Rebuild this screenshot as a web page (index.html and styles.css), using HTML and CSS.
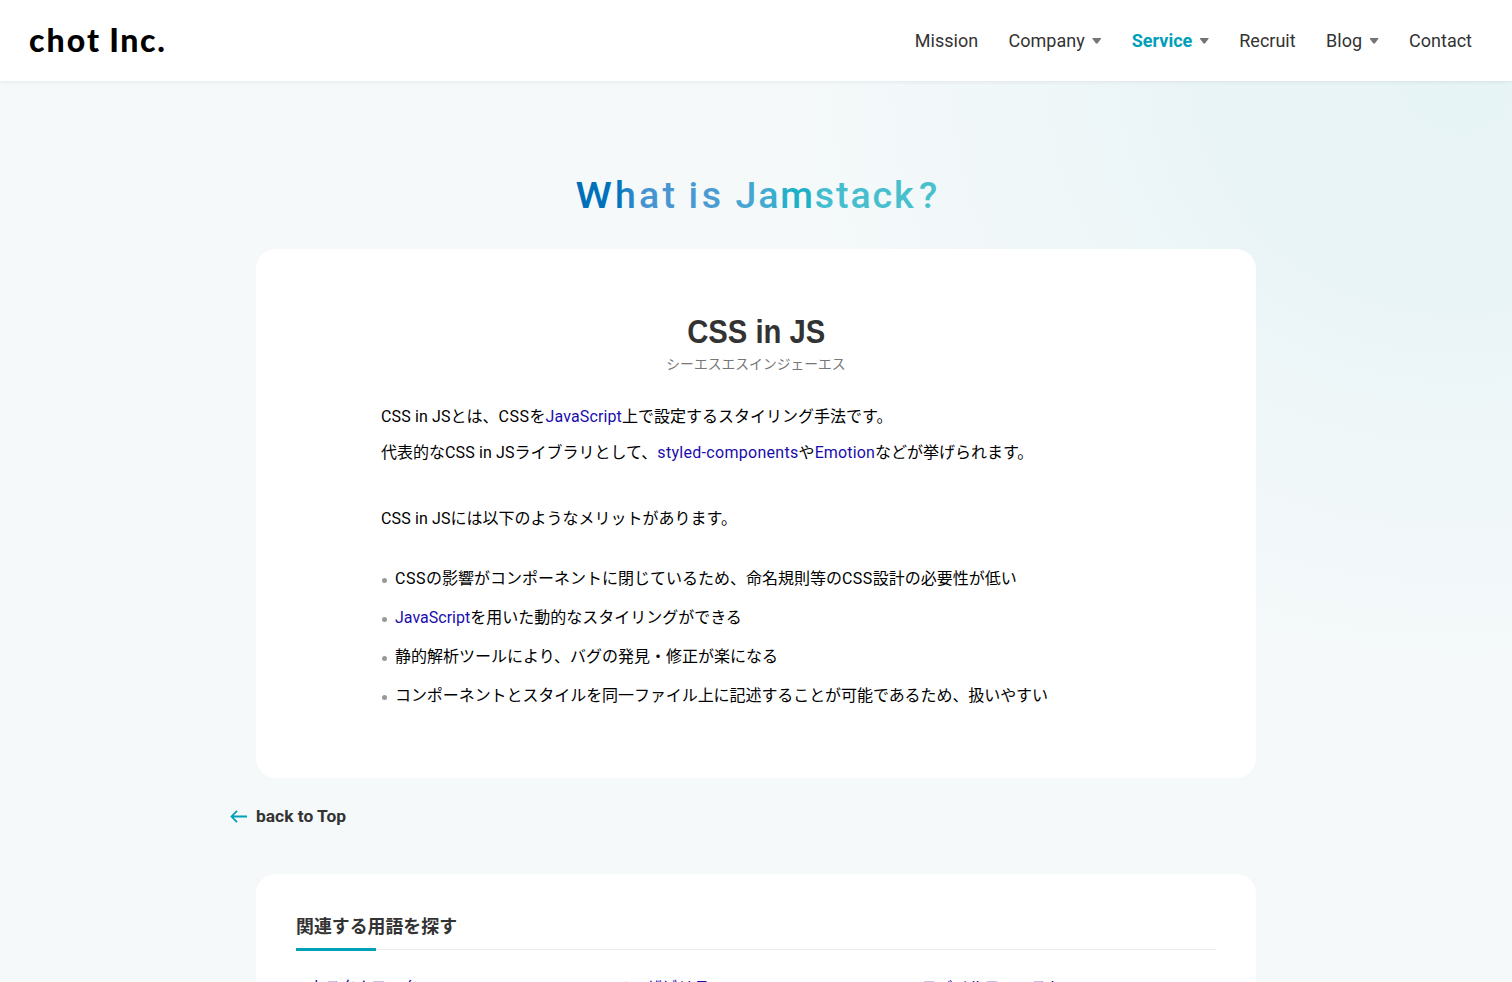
FILE: index.html
```html
<!DOCTYPE html>
<html lang="ja">
<head>
<meta charset="utf-8">
<title>CSS in JS | chot Inc.</title>
<link rel="stylesheet" href="styles.css">
</head>
<body>
<header class="header">
  <a class="logo" href="#">chot<span class="logo-inc">Inc.</span></a>
  <nav class="nav">
    <a class="nav-item" href="#">Mission</a>
    <a class="nav-item" href="#">Company<i class="caret"></i></a>
    <a class="nav-item active" href="#">Service<i class="caret"></i></a>
    <a class="nav-item" href="#">Recruit</a>
    <a class="nav-item" href="#">Blog<i class="caret"></i></a>
    <a class="nav-item" href="#">Contact</a>
  </nav>
</header>
<main class="main">
  <svg class="hero" width="372" height="48" viewBox="0 0 372 48" role="img" aria-label="What is Jamstack?">
    <defs>
      <linearGradient id="title" gradientUnits="userSpaceOnUse" x1="5" y1="0" x2="367" y2="0">
        <stop offset="0" stop-color="#006fb8"/><stop offset=".12" stop-color="#0074bd"/>
        <stop offset=".18" stop-color="#4593cf"/><stop offset=".38" stop-color="#4b9bd3"/>
        <stop offset=".53" stop-color="#43acd0"/><stop offset=".6" stop-color="#1eb0c6"/>
        <stop offset=".65" stop-color="#1eb0c6"/><stop offset=".68" stop-color="#45bdd0"/>
        <stop offset="1" stop-color="#49c0cc"/>
      </linearGradient>
    </defs>
    <g class="hero-text" fill="url(#title)">
      <text class="hero-w" transform="translate(5.500 36) scale(1.100 1)">W</text>
      <text x="45" y="36" textLength="60">hat</text>
      <text x="118.500" y="36" textLength="32.500">is</text>
      <text x="165.500" y="36" textLength="178">Jamstack</text>
      <text x="349" y="36">?</text>
    </g>
  </svg>
  <article class="card">
    <h1 class="title"><span class="title-text">CSS in JS</span></h1>
    <p class="reading">シーエスエスインジェーエス</p>
    <div class="body">
      <p class="para"><span class="latin">CSS in JS</span>とは、<span class="css">CSS</span>を<a class="link latin" href="#">JavaScript</a>上で設定するスタイリング手法です。<br>代表的な<span class="latin">CSS in JS</span>ライブラリとして、<a class="link styled" href="#">styled-components</a>や<a class="link latin" href="#">Emotion</a>などが挙げられます。</p>
      <p class="para"><span class="latin">CSS in JS</span>には以下のようなメリットがあります。</p>
      <ul class="list">
        <li class="item"><span class="css">CSS</span>の影響がコンポーネントに閉じているため、命名規則等の<span class="css">CSS</span>設計の必要性が低い</li>
        <li class="item"><a class="link" href="#">JavaScript</a>を用いた動的なスタイリングができる</li>
        <li class="item">静的解析ツールにより、バグの発見・修正が楽になる</li>
        <li class="item tight">コンポーネントとスタイルを同一ファイル上に記述することが可能であるため、扱いやすい</li>
      </ul>
    </div>
  </article>
  <a class="back" href="#">
    <svg width="18" height="14" viewBox="0 0 18 14" fill="none" stroke="#00a0b8" stroke-width="1.800"><path d="M7 1.800 1.500 7.500 7 13.200M1.500 7.500H17"/></svg>
    <span class="back-text">back to Top</span>
  </a>
  <section class="card related">
    <h2 class="related-title">関連する用語を探す</h2>
    <div class="terms">
      <a class="link" href="#">カスタムフック</a>
      <a class="link" href="#">ユーザビリティ</a>
      <a class="link" href="#">モバイルファースト</a>
    </div>
  </section>
</main>
</body>
</html>
```
FILE: styles.css
```css
* { box-sizing: border-box; }
body {
  margin: 0;
  height: 982px;
  overflow: hidden;
  font-family: Roboto, "Noto Sans CJK JP", sans-serif;
  color: #000;
  background: radial-gradient(ellipse 690px 610px at 1460px 80px, #e7f4f5 0%, #e9f4f6 34%, #f0f7f9 65%, #f5f9fa 100%) #f5f9fa;
}
a { text-decoration: none; color: inherit; }
.header {
  position: relative;
  display: flex;
  justify-content: space-between;
  align-items: center;
  height: 81px;
  padding: 0 40px 0 29px;
  background: #fff;
  box-shadow: 0 1px 4px rgba(0, 0, 0, .07);
}
.logo {
  display: flex;
  gap: 8px;
  padding-bottom: 2px;
  font: 900 32px/40px Lato, sans-serif;
  letter-spacing: 2.1px;
}
.logo-inc { letter-spacing: 1.6px; }
.nav { display: flex; gap: 30.5px; color: #333; font-size: 18px; line-height: 24px; }
.nav-item { display: flex; align-items: center; gap: 7.5px; white-space: nowrap; }
.active { color: #00a0b8; font-weight: 700; }
.caret {
  width: 9px;
  height: 6px;
  background: #757575;
  clip-path: polygon(8% 0, 92% 0, 100% 15%, 58% 100%, 42% 100%, 0 15%);
}
.main { width: 1000px; margin: 0 auto; padding-top: 91px; }
.hero { display: block; width: 372px; margin: 0 auto; }
.hero-text { font: 500 37.5px Roboto, sans-serif; }
.card { height: 529px; margin-top: 29px; padding: 60px 125px 0; border-radius: 20px; background: #fff; }
.title { margin: 0; height: 44px; text-align: center; color: #333; font: 700 34px/44px "Liberation Sans", sans-serif; }
.title-text { display: inline-block; transform: scaleX(.86); }
.reading { margin: -1px 0 0; text-align: center; color: #777; font-size: 13.8px; line-height: 24px; }
.body { margin-top: 23px; font-size: 16px; }
.para { margin: 0 0 30px; line-height: 36px; white-space: nowrap; }
.latin { letter-spacing: .13px; }
.css { letter-spacing: .5px; }
.styled { letter-spacing: .3px; }
.link { color: #1a0dab; }
.list { display: flex; flex-direction: column; gap: 15px; margin: 0; padding: 0; list-style: none; }
.item { position: relative; height: 24px; padding-left: 14px; line-height: 24px; white-space: nowrap; }
.item::before {
  content: "";
  position: absolute;
  left: 1px;
  top: 11px;
  width: 5px;
  height: 5px;
  border-radius: 50%;
  background: #999;
}
.tight { letter-spacing: -.07px; }
.back { display: flex; align-items: center; gap: 8px; width: 200px; height: 24px; margin: 26px 0 0 -26px; color: #333; }
.back-text { font-size: 17.4px; font-weight: 700; }
.related { height: 108px; margin-top: 46px; padding: 37px 40px 0; border-radius: 20px 20px 0 0; }
.related-title {
  position: relative;
  height: 39px;
  margin: 0;
  border-bottom: 1px solid #ebebeb;
  color: #333;
  font-size: 17.9px;
  line-height: 32px;
}
.related-title::after { content: ""; position: absolute; left: 0; bottom: -2px; width: 80px; height: 3px; background: #00a0b8; }
.terms { display: grid; grid-template-columns: repeat(3, 306px); margin-top: 26px; padding-left: 13px; font-size: 15.8px; line-height: 24px; }
```
